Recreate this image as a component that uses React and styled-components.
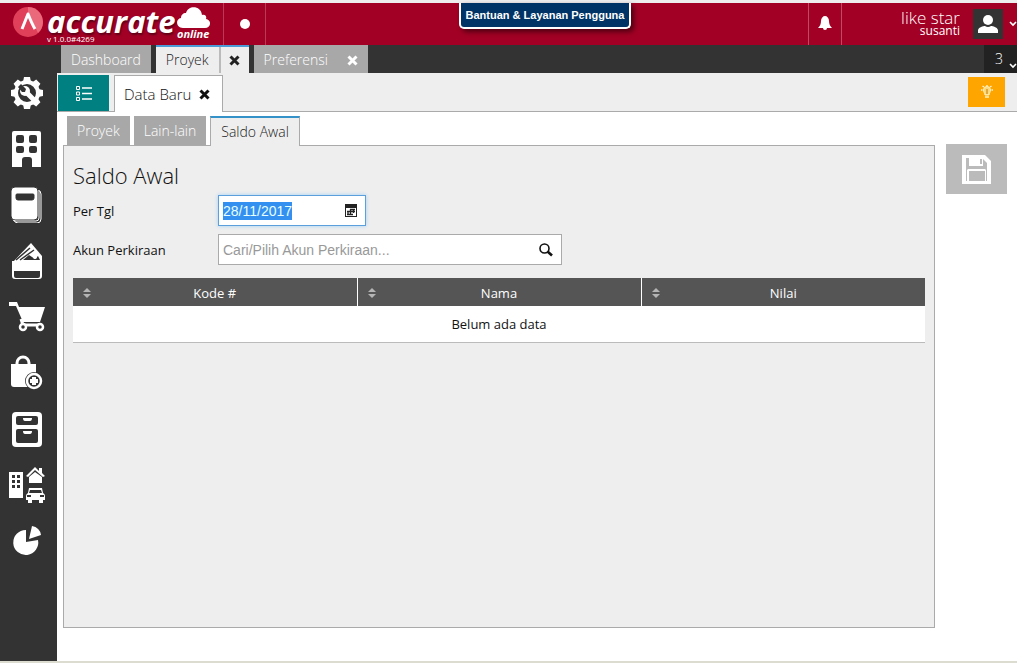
import { useState, useEffect, useRef } from 'react'
import styled, { createGlobalStyle } from 'styled-components';

const GlobalStyle = createGlobalStyle`
  * {
    box-sizing: border-box;
  }
  body {
    margin: 0;
    background: #fff;
    color: #111;
    font-family: "Open Sans", "Noto Sans", sans-serif;
    font-size: 13px;
    line-height: 18px;
  }
  button, input {
    margin: 0;
    padding: 0;
    border: 0;
    border-radius: 0;
    background: none;
    color: inherit;
    font: inherit;
  }
  button {
    cursor: pointer;
  }
  svg {
    display: block;
    flex: none;
  }
`;

const LogoMark = () => (
  <svg width="30" height="30" viewBox="0 0 30 30">
    <circle cx="15" cy="15" r="15" fill="#e0405a" />
    <path d="M15 5 L25 26 A15 15 0 0 0 27 6 A15 15 0 0 0 15 0 Z" fill="#ea6a7c" />
    <path d="M9 22 C11 17 13 12 15 7 C17 12 19 17 22 22" fill="none" stroke="#fff" strokeWidth="3" strokeLinejoin="round" />
  </svg>
);

const Cloud = () => (
  <svg width="33" height="21" viewBox="0 0 33 21">
    <path d="M6 21 C-1 21 -2 12 4 11 C4 8 6 6 9 6 C11 -2 24 -2 25 8 C28 7 30 9 29 12 C35 13 34 21 28 21 Z" fill="#fff" />
  </svg>
);

const Bell = () => (
  <svg width="14" height="16" viewBox="0 0 14 16" fill="#fff">
    <path d="M7 0 C9 0 11 2 11 5 C11 8 12 10 14 12 H0 C2 10 3 8 3 5 C3 2 5 0 7 0 Z" />
    <path d="M5 12 H9 A2 2 0 0 1 5 12 Z" />
  </svg>
);

const Person = () => (
  <svg width="20" height="18" viewBox="0 0 20 18" fill="#fff">
    <circle cx="10" cy="5" r="5" />
    <path d="M0 18 V15 C1 12 5 11 7 11 Q10 13 13 11 C15 11 19 12 20 15 V18 Z" />
  </svg>
);

const Chevron = () => (
  <svg width="8" height="6" viewBox="0 0 8 6">
    <path d="M1 1 L4 4 L7 1" fill="none" stroke="#fff" strokeWidth="1.600" />
  </svg>
);

const Cross = () => (
  <svg width="11" height="11" viewBox="0 0 11 11">
    <path d="M1.500 1.500 L9.500 9.500 M9.500 1.500 L1.500 9.500" stroke="currentColor" strokeWidth="3" />
  </svg>
);

const ListIcon = () => (
  <svg width="17" height="17" viewBox="0 0 17 17" fill="none" stroke="#fff">
    <path d="M1.500 1.500 h3 v3 h-3 z M1.500 7 h3 v3 h-3 z M1.500 12.500 h3 v3 h-3 z" />
    <path d="M7 3 H17 M7 8.500 H17 M7 14 H17" strokeWidth="1.400" />
  </svg>
);

const Bulb = () => (
  <svg width="12" height="14" viewBox="0 0 12 14" fill="none" stroke="#fff3c4">
    <path d="M4 10 C4 8 2.500 7.500 2.500 5 A3.500 3.500 0 0 1 9.500 5 C9.500 7.500 8 8 8 10 Z" fill="#ffd778" />
    <path d="M6 4 V9" stroke="#c07a00" />
    <path d="M4 12 H8 M0 5 H1.500 M10.500 5 H12 M6 0 V1 M1.500 1 L3 2 M10.500 1 L9 2" strokeWidth="1.400" />
  </svg>
);

const CalendarIcon = () => (
  <svg width="12" height="13" viewBox="0 0 12 13">
    <path d="M0 0 H12 V13 H0 Z M1 4 V12 H11 V4 Z" fill="#222" fillRule="evenodd" />
    <path d="M5 5.500 H10 M2 7.500 H10 M2 10.500 H8 M3 7 V11 M5.500 5 V11 M8.500 5 V9" stroke="#222" strokeWidth="1.300" />
  </svg>
);

const SearchIcon = () => (
  <svg width="14" height="14" viewBox="0 0 14 14" fill="none" stroke="#111">
    <circle cx="5.500" cy="5.500" r="4.500" strokeWidth="1.600" />
    <path d="M8.500 8.500 L13 12.500" strokeWidth="2.600" />
  </svg>
);

const SortIcon = () => (
  <svg width="8" height="10" viewBox="0 0 8 10" fill="#b5b5b5">
    <path d="M4 0 L8 4 H0 Z M0 6 H8 L4 10 Z" />
  </svg>
);

const SaveIcon = () => (
  <svg width="29" height="29" viewBox="0 0 29 29">
    <path d="M0 0 H23 L29 6 V29 H0 Z" fill="#fff" />
    <path d="M4 3 H7 V11 H21 V4 L25 8 V26 H24 V15 L23 14 H6 L5 15 V26 H4 Z" fill="#bbb" />
    <path d="M7 3 H21 V10 H8 Z" fill="#fff" />
    <path d="M7 16 H23 V26 H7 Z M18 4 H20 V9 H18 Z" fill="#bbb" />
  </svg>
);

const DARK = '#333';

const menus = [
  {
    name: 'Pengaturan',
    icon: (
      <>
        <circle cx="18" cy="18" r="11" fill="none" stroke="#fff" strokeWidth="4" />
        {[0, 45, 90, 135].map((angle) => (
          <path key={angle} d="M15 2 H21 L22 7 H14 Z M14 29 H22 L21 34 H15 Z" transform={`rotate(${angle} 18 18)`} />
        ))}
        <circle cx="16" cy="16" r="5" />
        <path d="M16 16 L26 26" stroke="#fff" strokeWidth="5" />
        <path d="M9 12 L12 9 L17 14 L16 17 L13 17 Z" fill={DARK} />
      </>
    ),
  },
  {
    name: 'Perusahaan',
    icon: (
      <path
        fillRule="evenodd"
        d="M5 0 H30 Q32 0 32 2 V36 H23 V29 Q23 26 20 26 H16 Q13 26 13 29 V36 H3 V2 Q3 0 5 0 Z M9 4 Q7 4 7 6 V10 Q7 12 9 12 H13 Q15 12 15 10 V6 Q15 4 13 4 Z M22 4 Q20 4 20 6 V10 Q20 12 22 12 H26 Q28 12 28 10 V6 Q28 4 26 4 Z M9 15 Q7 15 7 17 V20 Q7 22 9 22 H13 Q15 22 15 20 V17 Q15 15 13 15 Z M22 15 Q20 15 20 17 V20 Q20 22 22 22 H26 Q28 22 28 20 V17 Q28 15 26 15 Z"
      />
    ),
  },
  {
    name: 'Buku Besar',
    icon: (
      <>
        <rect x="5" y="3" width="27" height="33" rx="4" fill={DARK} stroke="#fff" />
        <path fillRule="evenodd" d="M6 0 H25 Q29 0 29 4 V29 Q29 33 25 33 H6 Q2 33 2 29 V4 Q2 0 6 0 Z M8 7 Q7 7 7 8 V11 Q7 13 9 13 H23 Q25 13 25 11 V8 Q25 7 24 7 Z" stroke={DARK} />
        <path d="M4 33 Q5 34 7 34 H27 Q30 34 30 31 V4" fill="none" stroke="#fff" />
      </>
    ),
  },
  {
    name: 'Kas & Bank',
    icon: (
      <>
        <path d="M4 19 L22 0 L33 13 V20 Z" />
        <path d="M7 17 L21 5 M11 17 L25 7" fill="none" stroke={DARK} strokeWidth="1.500" />
        <path d="M14 17 L20 12 L23 14 L26 16 L29 13 L31 17 Z" fill={DARK} />
        <circle cx="26" cy="14" r="2" />
        <path fillRule="evenodd" d="M3 18 H33 V33 Q33 36 30 36 H6 Q3 36 3 33 Z M5 28 V33 Q5 35 7 35 H29 Q31 35 31 33 V28 Z" />
      </>
    ),
  },
  {
    name: 'Penjualan',
    icon: (
      <>
        <path d="M0 3 H8 L10 8 H36 L31 23 H14 L7 7 H0 Z" />
        <path d="M12 20 L14 26 H31" stroke="#fff" strokeWidth="3" fill="none" />
        <circle cx="14" cy="28" r="3" fill={DARK} stroke="#fff" strokeWidth="2.500" />
        <circle cx="31" cy="28" r="3" fill={DARK} stroke="#fff" strokeWidth="2.500" />
      </>
    ),
  },
  {
    name: 'Pembelian',
    icon: (
      <>
        <path d="M8 11 V8 A6 6 0 0 1 20 8 V11" fill="none" stroke="#fff" strokeWidth="3" />
        <path d="M2 9 H27 V32 H5 Q2 32 2 29 Z" />
        <circle cx="25" cy="26" r="9" fill={DARK} />
        <circle cx="25" cy="26" r="7" fill={DARK} stroke="#fff" strokeWidth="2.500" />
        <path d="M21 26 H29 M25 22 V30" stroke="#fff" strokeWidth="4" />
      </>
    ),
  },
  {
    name: 'Persediaan',
    icon: (
      <>
        <rect x="3" y="1" width="30" height="35" rx="4" />
        <rect x="7" y="5" width="22" height="9" rx="2" fill={DARK} />
        <rect x="7" y="18" width="22" height="14" rx="2" fill={DARK} />
        <path d="M14 7 H23 Q23 10 21 10 H16 Q14 10 14 7 Z M14 20 H23 Q23 23 21 23 H16 Q14 23 14 20 Z" />
      </>
    ),
  },
  {
    name: 'Aset Tetap',
    icon: (
      <>
        <path fillRule="evenodd" d="M0 5 H14 V31 H0 Z M3 8 V11 H6 V8 Z M8 8 V11 H11 V8 Z M3 13 V16 H6 V13 Z M8 13 V16 H11 V13 Z M3 18 V21 H6 V18 Z M8 18 V21 H11 V18 Z" />
        <path d="M17 9 L26 0 L30 4 V1 H33 V6 L36 9 L34 10 L26 3 L19 10 Z" />
        <path d="M20 10 L26 5 L33 10 V16 H20 Z" />
        <path fillRule="evenodd" d="M20 21 H33 L34 26 Q36 27 36 29 V33 H34 V36 H30 V33 H23 V36 H19 V33 H17 V29 Q17 27 19 26 Z M21 23 L20 26 H33 L32 23 Z M18 28 V30 H22 V28 Z M31 28 V30 H35 V28 Z" />
      </>
    ),
  },
  {
    name: 'Laporan',
    icon: (
      <>
        <path d="M17 7 V19 L29 17 A12.500 12.500 0 1 1 17 7 Z" />
        <path d="M20 16 L23 3 A11 11 0 0 1 32 12 Z" />
      </>
    ),
  },
];

const columns = ['Kode #', 'Nama', 'Nilai'];

const App = () => {

    const [date, setDate] = useState('28/11/2017');
    const [account, setAccount] = useState('');
    const dateInput = useRef(null);

    useEffect(() => {
        dateInput.current.focus();
        dateInput.current.select();
      }, []);

    return (
      <Page>
        <GlobalStyle />
        <Header>
          <Brand href="#">
            <LogoMark />
            <Wordmark>
              <span>accurate</span>
              <Version>v 1.0.0#4269</Version>
            </Wordmark>
            <CloudMark>
              <Cloud />
              <span>online</span>
            </CloudMark>
          </Brand>
          <StatusButton aria-label="Status">
            <Dot />
          </StatusButton>
          <HelpSlot>
            <HelpButton>Bantuan &amp; Layanan Pengguna</HelpButton>
          </HelpSlot>
          <BellButton aria-label="Notifikasi">
            <Bell />
          </BellButton>
          <UserName>
            <span>like star</span>
            <small>susanti</small>
          </UserName>
          <UserButton aria-label="Akun">
            <Avatar>
              <Person />
            </Avatar>
            <Chevron />
          </UserButton>
        </Header>
        <Body>
          <Sidebar>
            {menus.map((menu) => (
              <MenuLink href="#" key={menu.name} aria-label={menu.name}>
                <svg width="36" height="36" viewBox="0 0 36 36" fill="#fff">{menu.icon}</svg>
              </MenuLink>
            ))}
          </Sidebar>
          <Main>
            <TabBar>
              <TopTab>
                <TabButton>Dashboard</TabButton>
              </TopTab>
              <TopTab $active>
                <TabButton>Proyek</TabButton>
                <CloseButton $divided aria-label="Tutup Proyek"><Cross /></CloseButton>
              </TopTab>
              <TopTab>
                <TabButton>Preferensi</TabButton>
                <CloseButton aria-label="Tutup Preferensi"><Cross /></CloseButton>
              </TopTab>
              <TabCount>
                <span>3</span>
                <Chevron />
              </TabCount>
            </TabBar>
            <SubBar>
              <ListButton aria-label="Daftar"><ListIcon /></ListButton>
              <DataTab>
                <button>Data Baru</button>
                <button aria-label="Tutup Data Baru"><Cross /></button>
              </DataTab>
              <HintButton aria-label="Petunjuk"><Bulb /></HintButton>
            </SubBar>
            <Content>
              <Form>
                <FormTabs>
                  <FormTab>Proyek</FormTab>
                  <FormTab>Lain-lain</FormTab>
                  <FormTab $active>Saldo Awal</FormTab>
                </FormTabs>
                <Panel>
                  <Title>Saldo Awal</Title>
                  <Row>
                    <Label htmlFor="date">Per Tgl</Label>
                    <Field $width="148px" $focus>
                      <Input
                        id="date"
                        ref={dateInput}
                        value={date}
                        onChange={(e) => setDate(e.target.value)}
                      />
                      <button aria-label="Pilih tanggal"><CalendarIcon /></button>
                    </Field>
                  </Row>
                  <Row>
                    <Label htmlFor="account">Akun Perkiraan</Label>
                    <Field $width="344px">
                      <Input
                        id="account"
                        placeholder="Cari/Pilih Akun Perkiraan..."
                        value={account}
                        onChange={(e) => setAccount(e.target.value)}
                      />
                      <button aria-label="Cari akun"><SearchIcon /></button>
                    </Field>
                  </Row>
                  <Table>
                    <thead>
                      <tr>
                        {columns.map((column) => (
                          <th key={column}>
                            <HeadCell>
                              <SortIcon />
                              <span>{column}</span>
                            </HeadCell>
                          </th>
                        ))}
                      </tr>
                    </thead>
                    <tbody>
                      <tr>
                        <td colSpan={3}>Belum ada data</td>
                      </tr>
                    </tbody>
                  </Table>
                </Panel>
              </Form>
              <SaveButton aria-label="Simpan"><SaveIcon /></SaveButton>
            </Content>
          </Main>
        </Body>
      </Page>
    );
}

export default App;

const Page = styled.div`
  display: flex;
  flex-direction: column;
  min-height: 100vh;
  border-top: 3px solid #eee;
  border-bottom: 2px solid #dddcd0;
`;

const Header = styled.header`
  display: flex;
  height: 42px;
  background: #a20025;
  color: #fff;
`;

const Brand = styled.a`
  display: flex;
  width: 223px;
  padding: 4px 0 0 13px;
  color: #fff;
  text-decoration: none;
`;

const Wordmark = styled.div`
  display: flex;
  flex-direction: column;
  width: 128px;
  margin-left: 4px;
  font-size: 31px;
  font-style: italic;
  font-weight: 700;
  line-height: 28px;
  text-shadow: 1px 2px 2px #600018;
`;

const Version = styled.small`
  font-size: 8px;
  font-style: normal;
  font-weight: 400;
  line-height: 8px;
  text-shadow: none;
`;

const CloudMark = styled.div`
  display: flex;
  flex-direction: column;
  margin-left: 2px;
  span {
    font-size: 11px;
    font-style: italic;
    font-weight: 700;
    line-height: 12px;
  }
`;

const StatusButton = styled.button`
  display: flex;
  align-items: center;
  justify-content: center;
  width: 43px;
  border: solid #b93a55;
  border-width: 0 1px;
`;

const Dot = styled.span`
  width: 10px;
  height: 10px;
  border-radius: 50%;
  background: #fff;
`;

const HelpSlot = styled.div`
  display: flex;
  flex: 1;
  align-items: flex-start;
  justify-content: center;
  padding-left: 16px;
`;

const HelpButton = styled.button`
  height: 26px;
  padding: 0 5px;
  border: 2px solid #fff;
  border-top: 0;
  border-radius: 0 0 5px 5px;
  background: #036;
  box-shadow: 3px 3px 5px #500012;
  font-family: "Liberation Sans", Arial, sans-serif;
  font-size: 11px;
  font-weight: 700;
  white-space: nowrap;
`;

const BellButton = styled.button`
  display: flex;
  align-items: center;
  justify-content: center;
  width: 34px;
  border: solid #c04a64;
  border-width: 0 1px;
`;

const UserName = styled.div`
  display: flex;
  flex-direction: column;
  align-items: flex-end;
  width: 118px;
  padding-top: 6px;
  font-size: 17px;
  font-weight: 300;
  line-height: 18px;
  small {
    font-size: 12px;
    font-weight: 400;
    line-height: 8px;
  }
`;

const UserButton = styled.button`
  display: flex;
  align-items: center;
  gap: 6px;
  width: 57px;
  padding-left: 13px;
`;

const Avatar = styled.span`
  display: flex;
  align-items: center;
  justify-content: center;
  width: 30px;
  height: 30px;
  background: ${DARK};
  flex: none;
`;

const Body = styled.div`
  display: flex;
  flex: 1;
`;

const Sidebar = styled.nav`
  flex: none;
  width: 57px;
  padding-top: 20px;
  background: ${DARK};
`;

const MenuLink = styled.a`
  display: flex;
  align-items: center;
  height: 56px;
  padding-left: 9px;
`;

const Main = styled.main`
  display: flex;
  flex: 1;
  flex-direction: column;
  min-width: 0;
`;

const TabBar = styled.div`
  display: flex;
  gap: 5px;
  height: 28px;
  padding-left: 4px;
  background: ${DARK};
`;

const TopTab = styled.div`
  display: flex;
  border-top: 2px solid ${(props) => (props.$active ? '#4a9bd6' : '#a8a8a8')};
  background: ${(props) => (props.$active ? '#eee' : '#a8a8a8')};
  color: ${(props) => (props.$active ? '#222' : '#fff')};
`;

const TabButton = styled.button`
  padding: 0 10px;
  font-size: 14px;
  font-weight: 300;
`;

const CloseButton = styled.button`
  display: flex;
  align-items: center;
  justify-content: center;
  width: 30px;
  border-left: ${(props) => (props.$divided ? '2px solid #bbb' : '0')};
`;

const TabCount = styled.button`
  display: flex;
  align-items: center;
  gap: 6px;
  width: 33px;
  margin-left: auto;
  padding-left: 11px;
  background: #222;
  color: #fff;
  font-size: 14px;
  font-weight: 300;
  svg {
    align-self: flex-end;
    margin-bottom: 4px;
  }
`;

const SubBar = styled.div`
  display: flex;
  height: 39px;
  padding: 2px 12px 0 1px;
  border-bottom: 1px solid #aaa;
  background: #eee;
`;

const ListButton = styled.button`
  display: flex;
  align-items: center;
  justify-content: center;
  width: 51px;
  background: #008080;
`;

const DataTab = styled.div`
  display: flex;
  align-items: center;
  gap: 8px;
  height: 37px;
  margin-left: 5px;
  padding: 0 12px 0 9px;
  border: 1px solid #aaa;
  border-bottom: 0;
  background: #fff;
  font-size: 15px;
  font-weight: 300;
`;

const HintButton = styled.button`
  display: flex;
  align-items: center;
  justify-content: center;
  width: 37px;
  height: 30px;
  margin: 2px 0 0 auto;
  background: #ffa500;
`;

const Content = styled.div`
  display: flex;
  flex: 1;
  align-items: flex-start;
  gap: 11px;
  padding: 4px 10px 33px 6px;
`;

const Form = styled.section`
  display: flex;
  flex: 1;
  flex-direction: column;
  align-self: stretch;
`;

const FormTabs = styled.div`
  display: flex;
  gap: 4px;
  height: 30px;
  padding-left: 4px;
`;

const FormTab = styled.button`
  height: ${(props) => (props.$active ? '30px' : '29px')};
  padding: 0 10px;
  border: solid ${(props) => (props.$active ? '#aaa' : '#a8a8a8')};
  border-width: ${(props) => (props.$active ? '2px 1px 0' : '0')};
  border-top-color: #3492c8;
  background: ${(props) => (props.$active ? '#eee' : '#a8a8a8')};
  color: ${(props) => (props.$active ? '#222' : '#fff')};
  font-size: 14px;
  font-weight: 300;
  z-index: 1;
`;

const Panel = styled.div`
  flex: 1;
  margin-top: -1px;
  padding: 15px 9px;
  border: 1px solid #aaa;
  background: #eee;
`;

const Title = styled.h1`
  margin: 0 0 6px;
  font-size: 22px;
  font-weight: 300;
  line-height: 28px;
`;

const Row = styled.div`
  display: flex;
  align-items: center;
  margin-bottom: 8px;
`;

const Label = styled.label`
  width: 145px;
`;

const Field = styled.div`
  display: flex;
  align-items: center;
  width: ${(props) => props.$width};
  height: 31px;
  padding: 0 8px 0 4px;
  border: 1px solid ${(props) => (props.$focus ? '#5b9fdc' : '#aaa')};
  background: #fff;
  box-shadow: ${(props) => (props.$focus ? '0 0 4px #9fd0f5' : 'none')};
`;

const Input = styled.input`
  flex: 1;
  min-width: 0;
  outline: 0;
  color: #333;
  font-family: "Liberation Sans", Arial, sans-serif;
  font-size: 14px;
  &::placeholder {
    color: #999;
  }
  &::selection {
    background: #3390f0;
    color: #e6ffff;
  }
`;

const Table = styled.table`
  width: 100%;
  margin-top: 13px;
  border-collapse: collapse;
  table-layout: fixed;
  th {
    height: 28px;
    padding: 2px 10px 0;
    background: #555;
    color: #fff;
    font-weight: 400;
  }
  th + th {
    border-left: 1px solid #fff;
  }
  td {
    height: 36px;
    padding: 0;
    border-bottom: 1px solid #bbb;
    background: #fff;
    text-align: center;
  }
`;

const HeadCell = styled.div`
  display: grid;
  grid-template-columns: 8px 1fr 8px;
  align-items: center;
`;

const SaveButton = styled.button`
  display: flex;
  align-items: center;
  justify-content: center;
  width: 61px;
  height: 50px;
  margin-top: 28px;
  background: #bbb;
`;
